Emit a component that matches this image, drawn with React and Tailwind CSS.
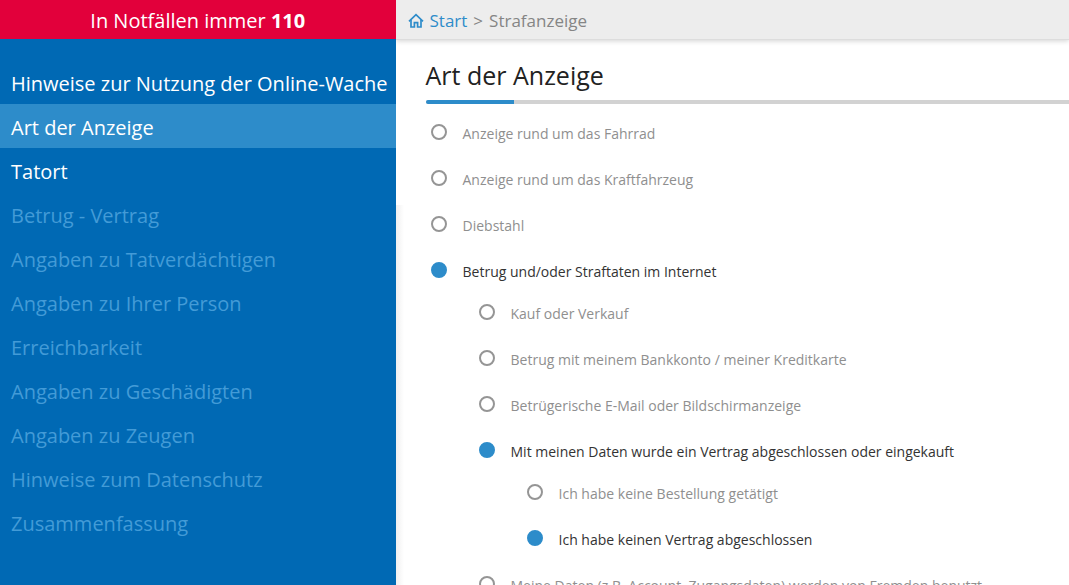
import { useState } from 'react'
import clsx from 'clsx'

const steps = [
  { label: 'Hinweise zur Nutzung der Online-Wache', enabled: true },
  { label: 'Art der Anzeige', enabled: true, current: true },
  { label: 'Tatort', enabled: true },
  { label: 'Betrug - Vertrag' },
  { label: 'Angaben zu Tatverdächtigen' },
  { label: 'Angaben zu Ihrer Person' },
  { label: 'Erreichbarkeit' },
  { label: 'Angaben zu Geschädigten' },
  { label: 'Angaben zu Zeugen' },
  { label: 'Hinweise zum Datenschutz' },
  { label: 'Zusammenfassung' },
]

const options = [
  { id: 'fahrrad', label: 'Anzeige rund um das Fahrrad' },
  { id: 'kfz', label: 'Anzeige rund um das Kraftfahrzeug' },
  { id: 'diebstahl', label: 'Diebstahl' },
  {
    id: 'internet',
    label: 'Betrug und/oder Straftaten im Internet',
    children: [
      { id: 'kauf', label: 'Kauf oder Verkauf' },
      { id: 'konto', label: 'Betrug mit meinem Bankkonto / meiner Kreditkarte' },
      { id: 'mail', label: 'Betrügerische E-Mail oder Bildschirmanzeige' },
      {
        id: 'vertrag',
        label: 'Mit meinen Daten wurde ein Vertrag abgeschlossen oder eingekauft',
        children: [
          { id: 'bestellung', label: 'Ich habe keine Bestellung getätigt' },
          { id: 'kein-vertrag', label: 'Ich habe keinen Vertrag abgeschlossen' },
        ],
      },
      { id: 'daten', label: 'Meine Daten (z.B. Account, Zugangsdaten) werden von Fremden benutzt' },
    ],
  },
]

const HomeIcon = () => (
  <svg viewBox="0 0 16 16" className="w-4 h-4" fill="none" stroke="currentColor" strokeWidth="1.7" aria-hidden="true">
    <path d="M1 8.4 8 1.6l7 6.8" />
    <path d="M3 7v7h3.4V9.6h3.2V14H13V7" />
  </svg>
)

// One level of choices, a checked choice opens its own sub level
const OptionList = ({ items, level, selected, onSelect }) => (
  <ul className="flex flex-col gap-6">
    {items.map((item) => {
      const checked = selected[level] === item.id

      return (
        <li key={item.id}>
          <label
            htmlFor={item.id}
            className={clsx(
              'flex items-start gap-4 text-sm leading-[22px] cursor-pointer',
              checked ? 'text-[#333333]' : 'text-[#8f8f8f]'
            )}
          >
            <input
              type="radio"
              id={item.id}
              name={`level-${level}`}
              checked={checked}
              onChange={() => onSelect(level, item.id)}
              className="appearance-none shrink-0 mt-px w-4 h-4 rounded-full border-2 border-[#959595] bg-white checked:border-[#2d8cca] checked:bg-[#2d8cca]"
            />
            <span>{item.label}</span>
          </label>

          {checked && item.children && (
            <div className="mt-5 ml-12">
              <OptionList items={item.children} level={level + 1} selected={selected} onSelect={onSelect} />
            </div>
          )}
        </li>
      )
    })}
  </ul>
)

const App = () => {
  const [selected, setSelected] = useState(['internet', 'vertrag', 'kein-vertrag'])

  const handleSelect = (level, id) => {
    setSelected([...selected.slice(0, level), id])
  }

  return (
    <div className="flex min-h-screen bg-white font-['Open_Sans','Noto_Sans',sans-serif]">
      {/* Sidebar */}
      <aside className="relative w-[37%] shrink-0 bg-[#0069b4] text-white">
        <p className="h-[39px] bg-[#e2003b] text-center text-xl leading-[42px]">
          In Notfällen immer <strong className="font-bold">110</strong>
        </p>

        <nav className="mt-[21px]">
          <ul>
            {steps.map((step) => (
              <li key={step.label}>
                <a
                  href={step.enabled ? '#' : undefined}
                  aria-current={step.current ? 'step' : undefined}
                  className={clsx(
                    'block h-11 pl-[11px] text-xl leading-[48px] whitespace-nowrap',
                    step.current && 'bg-[#2d8cca]',
                    !step.enabled && 'text-[#439bd7]'
                  )}
                >
                  {step.label}
                </a>
              </li>
            ))}
          </ul>
        </nav>

        {/* Soft edge over the content */}
        <div className="absolute left-full top-[205px] bottom-0 w-2 bg-linear-to-r from-black/6 to-transparent"></div>
      </aside>

      <div className="flex-1 min-w-0">
        {/* Breadcrumb */}
        <header className="h-10 border-b border-[#dddddd] bg-[#ededed] shadow-[0_1px_5px_rgba(0,0,0,0.18)]">
          <nav aria-label="Breadcrumb" className="flex items-center gap-[6px] pl-3 text-[17px] leading-[41px] text-[#858585]">
            <a href="#" className="flex items-center gap-[6px] text-[#2d8cca]">
              <HomeIcon />
              Start
            </a>
            <span>&gt;</span>
            <span>Strafanzeige</span>
          </nav>
        </header>

        <main className="pl-[30px]">
          <h1 className="pt-5 text-[25px] leading-[30px] text-[#222222]">Art der Anzeige</h1>

          <div className="mt-[10px] h-1 rounded-l-full overflow-hidden bg-[#d2d2d2]">
            <div className="w-[88px] h-full bg-[#2d8cca]"></div>
          </div>

          <form className="mt-[19px] pl-[5px]">
            <OptionList items={options} level={0} selected={selected} onSelect={handleSelect} />
          </form>
        </main>
      </div>
    </div>
  )
}

export default App
